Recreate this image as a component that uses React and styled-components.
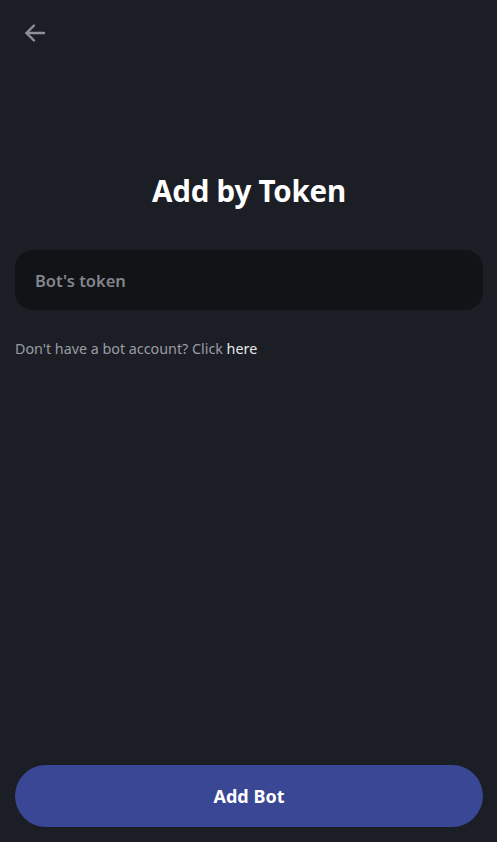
import React from 'react';
import styled, { createGlobalStyle } from 'styled-components';

const GlobalStyle = createGlobalStyle`
  html, body {
    margin: 0;
    padding: 0;
    background: #1c1e26;
  }
  * { box-sizing: border-box; }
`

const Page = styled.div`
  height: 842px;
  display: flex;
  flex-direction: column;
  background: #1c1e26;
  font-family: "Noto Sans", "Open Sans", sans-serif;
  padding: 0 14px 15px 15px;
`

const Header = styled.div`
  height: 66px;
  display: flex;
  align-items: center;
  padding-left: 8px;
`

const BackButton = styled.button`
  appearance: none;
  background: transparent;
  border: 0;
  padding: 0;
  width: 24px;
  height: 24px;
  color: #8e9097;
  display: flex;
  align-items: center;
  justify-content: center;
  cursor: pointer;
`

const Title = styled.h1`
  margin: 105px 0 0;
  text-align: center;
  color: #ffffff;
  font-size: 29.5px;
  font-weight: 700;
  line-height: 40px;
  letter-spacing: -0.2px;
`

const TokenInput = styled.input`
  margin-top: 39px;
  width: 100%;
  height: 60px;
  border: 0;
  outline: 0;
  border-radius: 18px;
  background: #111316;
  padding: 0 20px;
  color: #dcdde0;
  font-family: inherit;
  font-size: 16.5px;
  font-weight: 600;
  &::placeholder {
    color: #83858c;
  }
`

const Hint = styled.p`
  margin: 28px 0 0;
  color: #9a9ca3;
  font-size: 14.3px;
  line-height: 21px;
  a {
    color: #e8e9ec;
    text-decoration: none;
  }
`

const Spacer = styled.div`
  flex: 1;
`

const SubmitButton = styled.button`
  appearance: none;
  width: 100%;
  height: 62px;
  border: 0;
  border-radius: 31px;
  background: #394794;
  color: #fff;
  font-family: inherit;
  font-size: 18px;
  font-weight: 700;
  cursor: pointer;
`

const App = () => {
  return (
    <>
      <GlobalStyle />
      <Page>
        <Header>
          <BackButton aria-label="Back">
            <svg width="24" height="24" viewBox="0 0 24 24" fill="none" stroke="currentColor" strokeWidth="2.4" strokeLinecap="round" strokeLinejoin="round">
              <path d="M21 12H3.5" />
              <path d="M11 4.5L3.5 12L11 19.5" />
            </svg>
          </BackButton>
        </Header>
        <Title>Add by Token</Title>
        <TokenInput placeholder="Bot's token" />
        <Hint>Don't have a bot account? Click <a href="#">here</a></Hint>
        <Spacer />
        <SubmitButton>Add Bot</SubmitButton>
      </Page>
    </>
  )
}

export default App;
